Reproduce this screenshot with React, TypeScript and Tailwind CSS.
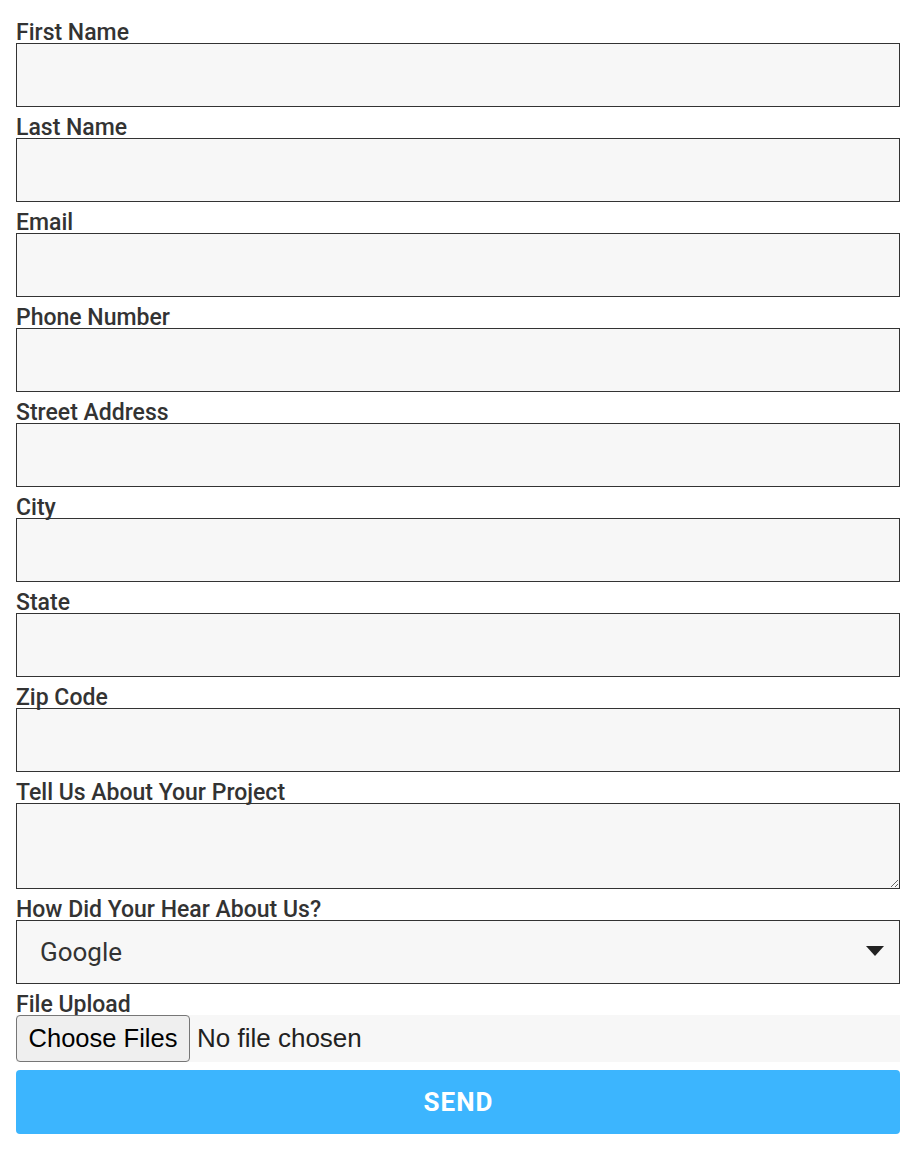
import { useState } from "react";

const fields = [
  "First Name",
  "Last Name",
  "Email",
  "Phone Number",
  "Street Address",
  "City",
  "State",
  "Zip Code",
];

const labelCls =
  "block h-[21px] text-[23px] font-medium leading-[21px] text-[#333333]";

export default function App() {
  const [source, setSource] = useState("Google");

  return (
    <div
      className="min-h-screen bg-white pl-4 pr-[18px] pt-[22px]"
      style={{ fontFamily: "Roboto, 'Liberation Sans', sans-serif" }}
    >
      <form className="flex flex-col" onSubmit={(e) => e.preventDefault()}>
        {fields.map((name) => (
          <div key={name} className="mb-[10px]">
            <label className={labelCls}>{name}</label>
            <input
              type="text"
              className="block h-[64px] w-full border border-[#333333] bg-[#f7f7f7] px-4 text-[20px] outline-none"
            />
          </div>
        ))}

        <div className="mb-[10px]">
          <label className={labelCls}>Tell Us About Your Project</label>
          <textarea className="block h-[86px] w-full border border-[#333333] bg-[#f7f7f7] px-4 text-[20px] outline-none" />
        </div>

        <div className="mb-[10px]">
          <label className={labelCls}>How Did Your Hear About Us?</label>
          <div className="relative">
            <select
              value={source}
              onChange={(e) => setSource(e.target.value)}
              className="block h-[64px] w-full appearance-none border border-[#333333] bg-[#f7f7f7] pl-[23px] text-[26px] text-[#333333] outline-none"
            >
              <option>Google</option>
              <option>Facebook</option>
              <option>Referral</option>
              <option>Other</option>
            </select>
            <svg
              className="pointer-events-none absolute right-[16px] top-[26px]"
              width="18"
              height="10"
              viewBox="0 0 18 10"
            >
              <path d="M0 0h18L9 10z" fill="#222222" />
            </svg>
          </div>
        </div>

        <div className="mb-[8px]">
          <label className={labelCls}>File Upload</label>
          <div className="flex h-[47px] items-center bg-[#f7f7f7]">
            <button
              type="button"
              className="h-[47px] w-[174px] rounded-[4px] border border-[#767676] bg-[#efefef] text-[25.5px] text-black"
              style={{ fontFamily: "'Liberation Sans', Arial, sans-serif" }}
            >
              Choose Files
            </button>
            <span
              className="ml-[7px] text-[26px] text-[#222222]"
              style={{ fontFamily: "'Liberation Sans', Arial, sans-serif" }}
            >
              No file chosen
            </span>
          </div>
        </div>

        <button
          type="submit"
          className="h-[64px] w-full rounded-[4px] bg-[#3cb5fe] pl-[1px] text-[26px] font-bold uppercase tracking-[1px] text-white"
        >
          Send
        </button>
      </form>
    </div>
  );
}
